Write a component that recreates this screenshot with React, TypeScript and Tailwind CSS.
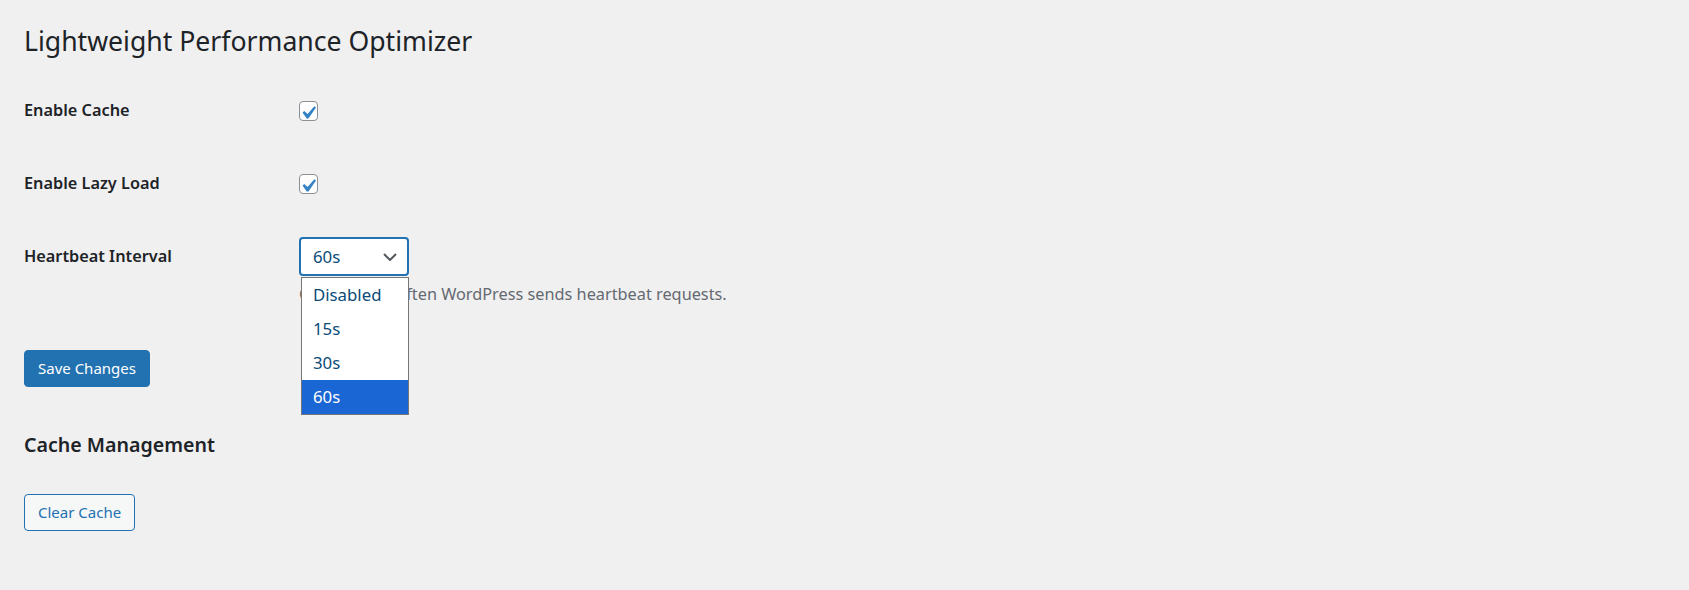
import { useState } from "react";

// WP-style settings page, rendered at ~120% zoom to match the reference.

const OPTIONS = ["Disabled", "15s", "30s", "60s"];

function Checkbox({ checked }: { checked: boolean }) {
  return (
    <span className="relative inline-block w-[19px] h-[20px] rounded-[4px] border border-[#8c8f94] bg-white">
      {checked && (
        <svg
          viewBox="0 0 20 20"
          className="absolute left-[-5px] top-[-2px] w-[26px] h-[26px]"
        >
          <path
            d="M14.83 4.89l1.34.94-5.81 8.38H9.02L5.78 9.67l1.34-1.25 2.57 2.4z"
            fill="#3582c4"
          />
        </svg>
      )}
    </span>
  );
}

function Row({ label, checked }: { label: string; checked: boolean }) {
  return (
    <div className="flex items-center h-[73px]">
      <div className="w-[275px] text-[16.3px] font-semibold text-[#1d2327]">
        {label}
      </div>
      <Checkbox checked={checked} />
    </div>
  );
}

export default function App() {
  const [value] = useState("60s");

  return (
    <div className="min-h-screen bg-[#f0f0f1] pl-[24px] font-['Noto_Sans',sans-serif] text-[#1d2327]">
      <h1 className="pt-[23px] text-[26.6px] leading-[36px] font-normal">
        Lightweight Performance Optimizer
      </h1>
      <div className="h-[15px]" />

      <Row label="Enable Cache" checked />
      <Row label="Enable Lazy Load" checked />

      <div className="pt-[17px]">
        <div className="flex items-center h-[39px]">
          <div className="w-[275px] text-[16.3px] font-semibold">
            Heartbeat Interval
          </div>
          <div className="relative">
            <div className="flex items-center justify-between w-[110px] h-[39px] pl-[12px] pr-[10px] bg-white border-2 border-[#2271b1] rounded-[4px] text-[16.8px] text-[#0a4b78]">
              <span>{value}</span>
              <svg viewBox="0 0 14 8" className="w-[14px] h-[8px]">
                <path
                  d="M1 1l6 6 6-6"
                  fill="none"
                  stroke="#50575e"
                  strokeWidth="2"
                />
              </svg>
            </div>
            <ul className="absolute left-[2px] top-[40px] z-10 w-[108px] bg-white border border-[#767676] text-[16.8px] text-[#0a4b78]">
              {OPTIONS.map((o) => (
                <li
                  key={o}
                  className={
                    o === value
                      ? "h-[34px] leading-[34px] pl-[11px] bg-[#1a66d4] text-white"
                      : "h-[34px] leading-[34px] pl-[11px]"
                  }
                >
                  {o}
                </li>
              ))}
            </ul>
          </div>
        </div>
        <p className="mt-[7px] ml-[275px] text-[16.3px] leading-[22px] text-[#646970]">
          Control how often WordPress sends heartbeat requests.
        </p>
      </div>

      <button
        type="button"
        className="mt-[45px] h-[37px] px-[13px] rounded-[4px] bg-[#2271b1] border border-[#2271b1] text-white text-[15px]"
      >
        Save Changes
      </button>

      <h2 className="mt-[44px] text-[19.6px] leading-[28px] font-semibold">
        Cache Management
      </h2>

      <button
        type="button"
        className="mt-[35px] h-[37px] px-[13px] rounded-[4px] bg-[#f6f7f7] border border-[#2271b1] text-[#2271b1] text-[15px]"
      >
        Clear Cache
      </button>
    </div>
  );
}
